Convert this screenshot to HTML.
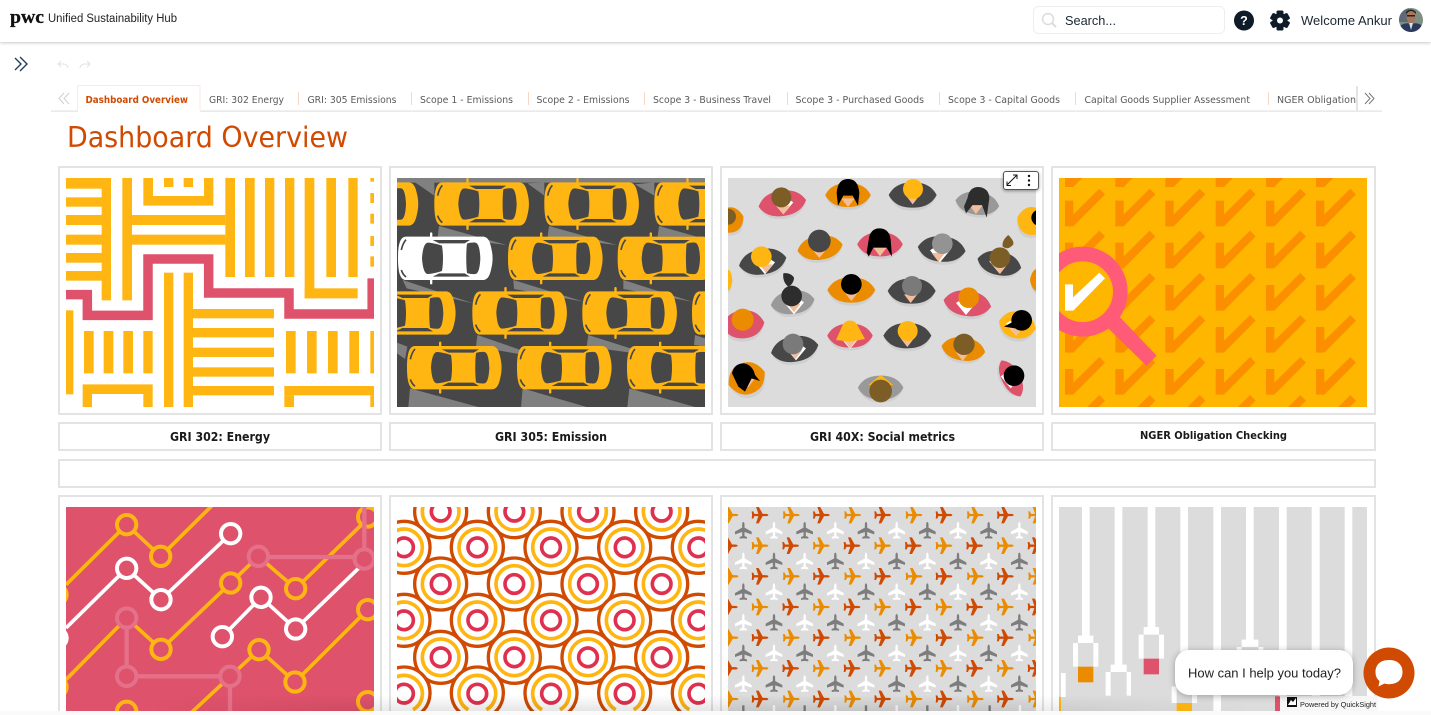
<!DOCTYPE html>
<html><head><meta charset="utf-8"><title>Dashboard Overview</title>
<style>
html,body{margin:0;padding:0;width:1431px;height:715px;overflow:hidden;background:#fff;font-family:"Liberation Sans",sans-serif}
#w{position:relative;width:1431px;height:715px;overflow:hidden}
.a{position:absolute}
svg{display:block}
.hdr{left:0;top:0;width:1431px;height:42px;background:#fff;box-shadow:0 1px 3px rgba(0,0,0,.22)}
.card{border:2px solid #e3e3e3;box-sizing:border-box;background:#fff}
</style></head><body><div id="w">
<div class="a hdr"></div>

<div class="a card" style="left:58px;top:166px;width:324px;height:249px"></div>
<div class="a card" style="left:389px;top:166px;width:324px;height:249px"></div>
<div class="a card" style="left:720px;top:166px;width:324px;height:249px"></div>
<div class="a card" style="left:1051px;top:166px;width:325px;height:249px"></div>
<div class="a card" style="left:58px;top:422px;width:324px;height:29px"></div>
<div class="a card" style="left:389px;top:422px;width:324px;height:29px"></div>
<div class="a card" style="left:720px;top:422px;width:324px;height:29px"></div>
<div class="a card" style="left:1051px;top:422px;width:325px;height:29px"></div>
<div class="a card" style="left:58px;top:459px;width:1318px;height:29px"></div>
<div class="a card" style="left:58px;top:495px;width:324px;height:220px"></div>
<div class="a card" style="left:389px;top:495px;width:324px;height:220px"></div>
<div class="a card" style="left:720px;top:495px;width:324px;height:220px"></div>
<div class="a card" style="left:1051px;top:495px;width:325px;height:220px"></div>

<!-- Card 1: stripes -->
<svg class="a" style="left:66px;top:178px" width="308" height="229" viewBox="33 39 924 687">
<rect x="33" y="39" width="924" height="687" fill="#fff"/>
<g fill="#FFB612">
<rect x="140" y="39" width="28" height="367"/>
<rect x="33" y="39" width="135" height="32"/><rect x="33" y="97" width="135" height="28"/><rect x="33" y="150" width="135" height="30"/><rect x="33" y="209" width="135" height="30"/><rect x="33" y="264" width="135" height="29"/><rect x="33" y="318" width="135" height="29"/>
<rect x="202" y="39" width="29" height="367"/><rect x="231" y="150" width="280" height="30"/><rect x="231" y="209" width="280" height="30"/>
<rect x="511" y="39" width="29" height="297"/><rect x="570" y="39" width="29" height="297"/><rect x="630" y="39" width="28" height="297"/><rect x="690" y="39" width="28" height="297"/>
<rect x="749" y="39" width="29" height="361"/><rect x="749" y="370" width="159" height="30"/>
<rect x="814" y="39" width="29" height="297"/><rect x="880" y="39" width="28" height="297"/>
<rect x="946" y="39" width="11" height="11"/><rect x="946" y="84" width="11" height="30"/><rect x="946" y="146" width="11" height="30"/><rect x="946" y="213" width="11" height="30"/><rect x="946" y="274" width="11" height="31"/>
<path d="M265 39h29v54h153V39h28v83H265z"/>
<rect x="327" y="39" width="28" height="27"/><rect x="386" y="39" width="28" height="27"/>
<rect x="327" y="323" width="28" height="403"/><rect x="386" y="323" width="28" height="403"/>
<rect x="414" y="432" width="243" height="28"/><rect x="414" y="489" width="243" height="28"/><rect x="414" y="548" width="243" height="28"/><rect x="414" y="607" width="243" height="28"/><rect x="414" y="663" width="243" height="28"/>
<rect x="33" y="436" width="22" height="252"/>
<rect x="87" y="498" width="29" height="127"/><rect x="146" y="498" width="29" height="127"/><rect x="205" y="498" width="29" height="127"/><rect x="265" y="498" width="28" height="127"/>
<path d="M83 726V658h210v68h-28V687H111v39z"/>
<rect x="693" y="498" width="29" height="127"/><rect x="756" y="498" width="29" height="127"/><rect x="819" y="498" width="29" height="127"/><rect x="883" y="498" width="29" height="127"/><rect x="946" y="498" width="11" height="127"/>
<rect x="688" y="663" width="269" height="28"/><rect x="688" y="691" width="29" height="35"/><rect x="946" y="691" width="11" height="35"/>
</g>
<path d="M33 389H97V451H279V282H461V384H702V447H951.500V340" fill="none" stroke="#DE526B" stroke-width="28.500"/>
</svg>

<!-- Card 2: cars -->
<svg class="a" style="left:397px;top:178px" width="308" height="229" viewBox="21 39 924 687">
<defs>
<g id="car">
<rect x="-46" y="-78" width="7" height="156" rx="3"/>
<path d="M-118-65H112C128-65 134-50 138-30C143-10 143 10 138 30C134 50 128 65 112 65H-118C-136 65-142 40-142 0C-142-40-136-65-118-65Z"/>
<path d="M-52-47C-38-46-22-42-10-38C-6-14-6 14-10 38C-22 42-38 46-52 47C-62 47-68 30-70 0C-68-30-62-47-52-47ZM65-44C72-47 84-48 90-47C100-46 104-25 105 0C104 25 100 46 90 47C84 48 72 47 65 44C62 20 62-20 65-44ZM-38-55H74L58-45H-18ZM-38 55H74L58 45H-18Z" fill="#474747"/>
<path d="M-132-25Q-128-45-118-56M-132 35Q-128 48-118 56" fill="none" stroke="#474747" stroke-width="5"/>
</g>
</defs>
<rect x="21" y="39" width="924" height="687" fill="#474747"/>
<g fill="#808080">
<rect x="21" y="39" width="924" height="14"/>
<path d="M75 52L133 92V52ZM412 55L463 92V52ZM735 58L793 92V52Z"/>
<path d="M147 183L350 240L143 215ZM477 183L680 240L473 215ZM807 183L945 222V215L803 215Z"/>
<path d="M38 345L250 415L50 370ZM370 345L580 410L372 372ZM700 345L905 410L700 372Z"/>
<path d="M21 533L52 545L45 582L21 565ZM262 510L465 580L258 545ZM595 510L790 572L590 545ZM915 510L945 520V545L912 540Z"/>
<path d="M60 670L265 726H55ZM398 670L590 726H393ZM718 670L915 726H712Z"/>
</g>
<g fill="#FFB612">
<use href="#car" transform="translate(-57 117)"/><use href="#car" transform="translate(275 117)"/><use href="#car" transform="translate(605 117)"/><use href="#car" transform="translate(935 117)"/>
<use href="#car" transform="translate(496 280)"/><use href="#car" transform="translate(825 280)"/>
<use href="#car" transform="translate(55 444)"/><use href="#car" transform="translate(389 444)"/><use href="#car" transform="translate(719 444)"/><use href="#car" transform="translate(1048 444)"/>
<use href="#car" transform="translate(193 608)"/><use href="#car" transform="translate(523 608)"/><use href="#car" transform="translate(853 608)"/>
</g>
<use href="#car" transform="translate(166 280)" fill="#fff"/>
</svg>

<!-- Card 3: people -->
<svg class="a" style="left:728px;top:178px" width="308" height="229" viewBox="24 39 924 687">
<defs>
<g id="b"><path d="M-70 0C-54-30-30-38 0-38C30-38 54-30 70 0C54 32 30 40 0 40C-30 40-54 32-70 0Z" fill="#cfcfcf" transform="translate(0 7)"/><path d="M-72 0C-56-30-30-38 0-38C30-38 56-30 72 0C56 30 30 38 0 38C-30 38-56 30-72 0Z"/></g>
<path id="n" d="M-20-4L0 22L20-4Z" fill="#f2bd9a"/>
<path id="c" d="M-30-6L0 30L30-6L18-14H-18Z" fill="#fff"/>
</defs>
<rect x="24" y="39" width="924" height="687" fill="#DCDCDC"/>
<use href="#b" transform="translate(187 115) rotate(-8)" fill="#DE526B"/><use href="#c" x="190" y="118"/><use href="#n" x="190" y="126" fill="#8f8f8f"/><circle cx="184" cy="97" r="30" fill="#7D5D26"/>
<use href="#b" transform="translate(384 90) scale(.95 .95)" fill="#EB8C00"/><use href="#n" x="384" y="104"/><path d="M350 85C352 55 364 42 384 42C404 42 416 55 418 85L414 122L398 92H370L354 122Z" fill="#000"/>
<use href="#b" transform="translate(578 90)" fill="#474747"/><use href="#n" x="578" y="96"/><circle cx="579" cy="72" r="30" fill="#FFB612"/>
<use href="#b" transform="translate(772 115) rotate(8) scale(.92 .9)" fill="#999"/><use href="#n" x="768" y="125" fill="#DE526B"/><path d="M743 98C746 78 756 66 775 66C796 67 808 80 808 100L800 158L786 120H758L738 145L732 125Z" fill="#2d2d2d"/>
<use href="#b" transform="translate(935 168) rotate(15) scale(.62 1.1)" fill="#FFB612"/><circle cx="958" cy="158" r="24" fill="#000"/>
<use href="#b" transform="translate(30 165) rotate(-15) scale(.58 1)" fill="#EB8C00"/><circle cx="24" cy="155" r="24" fill="#7D5D26"/>
<use href="#b" transform="translate(300 248) rotate(-8) scale(.95)" fill="#EB8C00"/><use href="#c" x="298" y="248"/><use href="#n" x="298" y="256"/><circle cx="298" cy="228" r="34" fill="#474747"/>
<use href="#b" transform="translate(480 238) scale(.95)" fill="#DE526B"/><use href="#n" x="480" y="252" fill="#FFB612"/><path d="M446 225C448 202 460 190 478 190C498 190 510 202 512 225L516 275L500 248H460L446 275L440 262Z" fill="#000"/>
<use href="#b" transform="translate(665 252) rotate(5)" fill="#474747"/><use href="#c" x="660" y="262"/><use href="#n" x="655" y="268" fill="#EB8C00"/><circle cx="667" cy="236" r="31" fill="#939393"/>
<use href="#b" transform="translate(128 290) rotate(-10)" fill="#474747"/><use href="#c" x="135" y="298"/><use href="#n" x="138" y="302" fill="#D04A02"/><circle cx="124" cy="275" r="31" fill="#FFB612"/>
<use href="#b" transform="translate(838 295) rotate(12) scale(.93)" fill="#474747"/><use href="#c" x="838" y="295"/><use href="#n" x="840" y="305"/><circle cx="840" cy="278" r="31" fill="#7D5D26"/><path d="M848 245C845 230 855 218 865 210C875 220 882 230 880 238C868 252 858 252 848 245Z" fill="#7D5D26"/>
<use href="#b" transform="translate(24 345) scale(.18 .8)" fill="#FFB612"/><use href="#b" transform="translate(955 345) scale(.35 .9)" fill="#EB8C00"/>
<use href="#b" transform="translate(394 375)" fill="#EB8C00"/><use href="#n" x="394" y="386" fill="#FFB612"/><circle cx="394" cy="358" r="31" fill="#000"/>
<use href="#b" transform="translate(575 378)" fill="#474747"/><use href="#n" x="572" y="392" fill="#9a6a15"/><circle cx="576" cy="363" r="30" fill="#7a7a7a"/>
<use href="#b" transform="translate(218 412) rotate(-8) scale(.92)" fill="#999"/><use href="#c" x="222" y="418"/><use href="#n" x="222" y="420" fill="#8d6748"/><circle cx="215" cy="393" r="31" fill="#2d2d2d"/><path d="M205 365C192 355 188 340 190 325C205 322 218 330 222 338C222 350 215 360 205 365Z" fill="#2d2d2d"/>
<use href="#b" transform="translate(742 415) rotate(8)" fill="#DE526B"/><use href="#c" x="738" y="420"/><circle cx="746" cy="398" r="31" fill="#EB8C00"/>
<use href="#b" transform="translate(70 478) rotate(-5) scale(.88 1.1)" fill="#DE526B"/><circle cx="68" cy="464" r="33" fill="#EB8C00"/>
<use href="#b" transform="translate(892 480) rotate(12) scale(.78 1.05)" fill="#FFB612"/><use href="#c" x="888" y="482"/><use href="#n" x="888" y="490" fill="#8d6748"/><circle cx="905" cy="466" r="31" fill="#000"/><path d="M880 470L852 485L885 490Z" fill="#000"/>
<use href="#b" transform="translate(390 512) scale(.95)" fill="#DE526B"/><use href="#c" x="390" y="522"/><use href="#n" x="390" y="528" fill="#FFB612"/><path d="M348 525L368 480C378 462 402 462 412 480L435 522L390 530Z" fill="#FFB612"/>
<use href="#b" transform="translate(562 512)" fill="#474747"/><use href="#n" x="562" y="524"/><circle cx="563" cy="498" r="30" fill="#FFB612"/>
<use href="#b" transform="translate(730 552) rotate(8) scale(.92)" fill="#EB8C00"/><use href="#n" x="728" y="566"/><circle cx="732" cy="538" r="32" fill="#7D5D26"/>
<use href="#b" transform="translate(224 552) rotate(-10)" fill="#474747"/><use href="#c" x="228" y="556"/><use href="#n" x="226" y="560"/><circle cx="219" cy="537" r="31" fill="#7a7a7a"/>
<use href="#b" transform="translate(80 640) rotate(-20) scale(.8 1.25)" fill="#EB8C00"/><use href="#n" x="84" y="646" fill="#a0705c"/><path d="M36 625C40 605 52 595 72 595C90 598 102 612 105 630L120 648L95 640L75 680L55 665Z" fill="#000"/>
<use href="#b" transform="translate(482 668) scale(.95)" fill="#999"/><path d="M445 660L482 630L520 660Z" fill="#FFB612"/><circle cx="482" cy="678" r="34" fill="#7D5D26"/>
<use href="#b" transform="translate(873 640) rotate(62) scale(.85 .72)" fill="#DE526B"/><use href="#c" x="872" y="640"/><circle cx="882" cy="632" r="31" fill="#000"/>
</svg>

<!-- Expand toolbar -->
<div class="a" style="left:1003px;top:171px;width:36px;height:19px;box-sizing:border-box;background:#fff;border:1px solid #555;border-radius:3px;box-shadow:0 1px 3px rgba(0,0,0,.4)"></div>
<svg class="a" style="left:1003px;top:171px" width="36" height="19" viewBox="0 0 36 19">
<path d="M4.500 13.500L13.500 4.500M10 4H14V8M8 14.500H4V10.500" fill="none" stroke="#111" stroke-width="1"/>
<circle cx="26" cy="5" r="1.200" fill="#111"/><circle cx="26" cy="9.500" r="1.200" fill="#111"/><circle cx="26" cy="14" r="1.200" fill="#111"/>
</svg>

<!-- Card 4: checks -->
<svg class="a" style="left:1059px;top:178px" width="308" height="229" viewBox="27 39 924 687">
<defs>
<path id="k" d="M45 107H70V148L148 71L165 88L70 184H45Z"/>
<g id="kr"><use href="#k"/><use href="#k" x="151"/><use href="#k" x="301"/><use href="#k" x="452"/><use href="#k" x="603"/><use href="#k" x="753"/></g>
</defs>
<rect x="27" y="39" width="924" height="687" fill="#FFB600"/>
<g fill="#FB8F00">
<use href="#kr" y="-118"/><use href="#kr"/><use href="#kr" y="126"/><use href="#kr" y="253"/><use href="#kr" y="379"/><use href="#kr" y="505"/><use href="#kr" y="619"/>
</g>
<circle cx="98" cy="380" r="113" fill="#FFB600" stroke="#FF5A78" stroke-width="44"/>
<path d="M208 455L320 572L290 603L175 490Z" fill="#FF5A78"/>
<path d="M45 358H69V397L148 323L165 340L70 437H45Z" fill="#fff"/>
</svg>

<!-- Row 2 card 1: circuits -->
<svg class="a" style="left:66px;top:507px" width="308" height="204" viewBox="33 52 924 612">
<rect x="33" y="52" width="924" height="612" fill="#DE526B"/>
<g fill="none" stroke="#FFB612" stroke-width="11">
<path d="M33 285L215 105L317 200L480 39"/>
<path d="M33 570L215 385L318 479L527 280L610 200L722 297L925 100L945 80"/>
<path d="M410 668L612 480L720 577L938 360"/>
</g>
<g fill="#DE526B" stroke="#FFB612" stroke-width="12">
<circle cx="215" cy="105" r="29"/><circle cx="317" cy="200" r="29"/><circle cx="6" cy="315" r="29"/><circle cx="318" cy="479" r="29"/><circle cx="527" cy="280" r="29"/><circle cx="722" cy="297" r="29"/><circle cx="938" cy="82" r="29"/><circle cx="6" cy="592" r="29"/><circle cx="612" cy="480" r="29"/><circle cx="720" cy="577" r="29"/><circle cx="938" cy="360" r="29"/><path d="M186 665A29 29 0 0 1 244 665"/><circle cx="938" cy="636" r="29"/>
</g>
<g fill="none" stroke="#E5708A" stroke-width="13">
<path d="M610 202H928V52"/><path d="M215 385V560H525V668"/>
</g>
<g fill="#DE526B" stroke="#E5708A" stroke-width="12">
<circle cx="610" cy="200" r="29"/><circle cx="928" cy="208" r="29"/><circle cx="215" cy="385" r="29"/><circle cx="215" cy="560" r="29"/><circle cx="525" cy="560" r="29"/>
</g>
<g fill="none" stroke="#fff" stroke-width="11">
<path d="M33 415L215 236L318 330L527 132"/><path d="M502 441L618 323L722 418L925 222"/>
</g>
<g fill="#DE526B" stroke="#fff" stroke-width="12">
<circle cx="215" cy="236" r="29"/><circle cx="318" cy="330" r="29"/><circle cx="527" cy="132" r="29"/><circle cx="6" cy="445" r="29"/><circle cx="502" cy="441" r="29"/><circle cx="618" cy="323" r="29"/><circle cx="722" cy="418" r="29"/>
</g>
<circle cx="928" cy="208" r="29" fill="#DE526B" stroke="#E5708A" stroke-width="12"/>
</svg>

<!-- Row 2 card 2: rings -->
<svg class="a" style="left:397px;top:507px" width="308" height="204" viewBox="21 52 924 612">
<defs>
<g id="r"><circle r="78" fill="#fff" stroke="#D04A02" stroke-width="10"/><circle r="55" fill="none" stroke="#FFB612" stroke-width="11"/><circle r="28" fill="none" stroke="#E0304F" stroke-width="11"/></g>
<g id="rb"><path d="M-52.200 56A78 78 0 1 1 52.200 56Z" fill="#fff"/><path d="M-52.200 56A78 78 0 1 1 52.200 56" fill="none" stroke="#D04A02" stroke-width="10"/><path d="M-27 48A55 55 0 1 1 27 48" fill="none" stroke="#FFB612" stroke-width="11"/><circle r="28" fill="none" stroke="#E0304F" stroke-width="11"/></g>
<g id="ru"><use href="#r" x="152"/><use href="#r" x="373"/><use href="#r" x="594"/><use href="#r" x="815"/></g>
<g id="ro"><use href="#r" x="42"/><use href="#r" x="262"/><use href="#r" x="483"/><use href="#r" x="704"/><use href="#r" x="925"/></g>
<g id="rob"><use href="#rb" x="42"/><use href="#rb" x="262"/><use href="#rb" x="483"/><use href="#rb" x="704"/><use href="#rb" x="925"/></g>
</defs>
<rect x="21" y="52" width="924" height="612" fill="#fff"/>
<use href="#ru" y="66"/><use href="#ru" y="283"/><use href="#ru" y="503"/>
<use href="#ro" y="173"/><use href="#ro" y="392"/><use href="#rob" y="612"/>
</svg>

<!-- Row 2 card 3: planes -->
<svg class="a" style="left:728px;top:507px" width="308" height="204" viewBox="24 52 924 612">
<defs>
<path id="p" d="M25 0C25-2 22-3.500 17-3.500H8L-4-25H-12L-5-3.500H-17L-20-11H-25L-24-3V3L-25 11H-20L-17 3.500H-5L-12 25H-4L8 3.500H17C22 3.500 25 2 25 0Z"/>
<g id="t">
<use href="#p" transform="translate(30 76)" fill="#EB8C00"/><use href="#p" transform="translate(120 76)" fill="#D04A02"/>
<use href="#p" transform="translate(28 168)" fill="#D04A02"/><use href="#p" transform="translate(120 168)" fill="#EB8C00"/>
<use href="#p" transform="translate(70 122) rotate(-90)" fill="#7d7d7d"/><use href="#p" transform="translate(162 122) rotate(-90)" fill="#fff"/>
<use href="#p" transform="translate(70 214) rotate(-90)" fill="#fff"/><use href="#p" transform="translate(162 214) rotate(-90)" fill="#7d7d7d"/>
</g>
<g id="tr"><use href="#t"/><use href="#t" x="184"/><use href="#t" x="368"/><use href="#t" x="552"/><use href="#t" x="736"/><use href="#t" x="920"/></g>
</defs>
<rect x="24" y="52" width="924" height="612" fill="#DCDCDC"/>
<use href="#tr"/><use href="#tr" y="184"/><use href="#tr" y="368"/>
<g fill="#EB8C00"><use href="#p" transform="translate(30 628)"/><use href="#p" transform="translate(214 628)"/><use href="#p" transform="translate(398 628)"/><use href="#p" transform="translate(582 628)"/><use href="#p" transform="translate(766 628)"/><use href="#p" transform="translate(950 628)"/></g>
<g fill="#D04A02"><use href="#p" transform="translate(120 628)"/><use href="#p" transform="translate(304 628)"/><use href="#p" transform="translate(488 628)"/><use href="#p" transform="translate(672 628)"/><use href="#p" transform="translate(856 628)"/></g>
<g fill="#7d7d7d"><rect x="66.500" y="647" width="7" height="20"/><rect x="250.500" y="647" width="7" height="20"/><rect x="434.500" y="647" width="7" height="20"/><rect x="618.500" y="647" width="7" height="20"/><rect x="805.500" y="647" width="7" height="20"/></g>
<g fill="#fff"><rect x="158.500" y="647" width="7" height="20"/><rect x="342.500" y="647" width="7" height="20"/><rect x="526.500" y="647" width="7" height="20"/><rect x="710.500" y="647" width="7" height="20"/><rect x="896.500" y="647" width="7" height="20"/></g>
</svg>

<!-- Row 2 card 4: plugs -->
<svg class="a" style="left:1059px;top:507px" width="308" height="204" viewBox="27 52 924 612">
<rect x="27" y="52" width="924" height="612" fill="#DCDCDC"/>
<g fill="#fff">
<rect x="96" y="52" width="23" height="390"/><rect x="194" y="52" width="23" height="476"/><rect x="293" y="52" width="23" height="364"/><rect x="391" y="52" width="23" height="520"/><rect x="490" y="52" width="23" height="612"/><rect x="588" y="52" width="23" height="402"/><rect x="687" y="52" width="23" height="612"/><rect x="785" y="52" width="24" height="612"/><rect x="884" y="52" width="23" height="612"/>
<path d="M84 438H130V460H145V531H130V460H84V531H69V460H84Z"/>
<path d="M182 525H230V547H243V618H230V547H182V618H167V547H182Z"/>
<path d="M281 412H327V435H342V507H327V435H281V507H266V435H281Z"/>
<path d="M380 568H426V590H441V640H426V590H380V640H365V590H380Z"/>
<path d="M575 450H625V472H640V520H625V472H575V520H560V472H575Z"/>
<rect x="33" y="550" width="14" height="72"/>
</g>
<rect x="84" y="531" width="46" height="47" fill="#EB8C00"/>
<rect x="281" y="507" width="46" height="47" fill="#DE526B"/>
<rect x="380" y="640" width="46" height="24" fill="#FFB612"/>
<rect x="675" y="620" width="17" height="44" fill="#DE526B"/>
<rect x="27" y="622" width="6" height="42" fill="#FFB612"/>
</svg>

<!-- bottom edge -->
<div class="a" style="left:150px;top:695px;width:1100px;height:16px;background:linear-gradient(to bottom,rgba(0,0,0,0),rgba(0,0,0,.1));-webkit-mask-image:linear-gradient(to right,transparent,#000 25%,#000 75%,transparent)"></div>
<div class="a" style="left:0;top:711px;width:1431px;height:4px;background:#fafafa"></div>

<!-- All text / chrome -->
<svg class="a" style="left:0;top:0" width="1431" height="715" viewBox="0 0 1431 715">
<g font-family="'Liberation Sans',sans-serif">
<text x="10" y="23" font-family="'Liberation Serif',serif" font-size="19" font-weight="bold" fill="#111" stroke="#111" stroke-width=".3" textLength="34" lengthAdjust="spacingAndGlyphs">pwc</text>
<text x="48" y="22" font-size="11.500" fill="#222" textLength="129" lengthAdjust="spacingAndGlyphs">Unified Sustainability Hub</text>

<rect x="1033.500" y="6.500" width="191" height="27" rx="5" fill="#fff" stroke="#eee"/>
<circle cx="1048" cy="19" r="5.500" fill="none" stroke="#dcdcdc" stroke-width="1.500"/><path d="M1052 23L1056 27" stroke="#dcdcdc" stroke-width="2"/>
<text x="1065" y="25" font-size="13" fill="#1c2733" textLength="51" lengthAdjust="spacingAndGlyphs">Search...</text>
<circle cx="1244" cy="20.500" r="10" fill="#0e1b28"/>
<text x="1244" y="25" font-size="12.500" font-weight="bold" fill="#fff" text-anchor="middle">?</text>
<g fill="#0e1b28"><circle cx="1280" cy="20.500" r="7.500"/><g><rect x="1276.500" y="10.500" width="7" height="20" rx="1.500"/><rect x="1276.500" y="10.500" width="7" height="20" rx="1.500" transform="rotate(60 1280 20.500)"/><rect x="1276.500" y="10.500" width="7" height="20" rx="1.500" transform="rotate(120 1280 20.500)"/></g></g>
<circle cx="1280" cy="20.500" r="3" fill="#fff"/>
<text x="1301" y="25" font-size="13" fill="#1c2733" textLength="91" lengthAdjust="spacingAndGlyphs">Welcome Ankur</text>
<clipPath id="av"><circle cx="1411" cy="20" r="12"/></clipPath>
<g clip-path="url(#av)"><rect x="1399" y="8" width="24" height="24" fill="#7e8f82"/><rect x="1399" y="8" width="10" height="14" fill="#5d6a78"/><path d="M1399 32L1401 25Q1406 22 1411 24Q1417 22 1421 25L1423 32Z" fill="#2a3a5c"/><ellipse cx="1411" cy="17" rx="4.500" ry="6" fill="#a8765c"/><path d="M1406 14Q1411 8 1416 14L1416 12Q1411 7 1406 12Z" fill="#222"/><rect x="1407" y="15" width="8" height="1.500" fill="#222"/><path d="M1409 23L1411 30L1413 23Z" fill="#dde"/></g>

<path d="M15 58L21 64L15 70M20 57L27 64L20 71" fill="none" stroke="#22405c" stroke-width="1.400"/>
<path d="M58 64L61 61M58 64L61 67M58 64H64Q68 65 68 68" fill="none" stroke="#e2e2e2" stroke-width="1"/>
<path d="M90 64L87 61M90 64L87 67M90 64H84Q80 65 80 68" fill="none" stroke="#e2e2e2" stroke-width="1"/>

<rect x="51" y="110.500" width="1331" height="1.200" fill="#e2e2e2"/>
<rect x="77.500" y="85.500" width="122.500" height="26" fill="#fff" stroke="#fbeae3"/>
<rect x="78" y="110" width="122" height="2" fill="#fff"/>
<path d="M64 93L59 98.500L64 104M69 93L64 98.500L69 104" fill="none" stroke="#cfcfcf" stroke-width="1"/>
<g font-family="'DejaVu Sans',sans-serif">
<text x="85.500" y="103" font-size="9.800" font-weight="bold" fill="#D04A02" textLength="102.500" lengthAdjust="spacingAndGlyphs">Dashboard Overview</text>
<g font-size="9.800" fill="#5a5a5a">
<text x="209" y="103" textLength="75" lengthAdjust="spacingAndGlyphs">GRI: 302 Energy</text>
<text x="307.500" y="103" textLength="89" lengthAdjust="spacingAndGlyphs">GRI: 305 Emissions</text>
<text x="420" y="103" textLength="93" lengthAdjust="spacingAndGlyphs">Scope 1 - Emissions</text>
<text x="536.500" y="103" textLength="93" lengthAdjust="spacingAndGlyphs">Scope 2 - Emissions</text>
<text x="653" y="103" textLength="118" lengthAdjust="spacingAndGlyphs">Scope 3 - Business Travel</text>
<text x="795.500" y="103" textLength="128.500" lengthAdjust="spacingAndGlyphs">Scope 3 - Purchased Goods</text>
<text x="948" y="103" textLength="112" lengthAdjust="spacingAndGlyphs">Scope 3 - Capital Goods</text>
<text x="1084.500" y="103" textLength="165.500" lengthAdjust="spacingAndGlyphs">Capital Goods Supplier Assessment</text>
<text x="1277" y="103" textLength="79" lengthAdjust="spacingAndGlyphs">NGER Obligation</text>
</g>
<text x="67" y="147" font-size="28.500" fill="#D04A02" textLength="281" lengthAdjust="spacingAndGlyphs">Dashboard Overview</text>
<g font-weight="bold" fill="#1a1a1a" font-size="12">
<text x="170" y="441" textLength="100" lengthAdjust="spacingAndGlyphs">GRI 302: Energy</text>
<text x="495" y="441" textLength="112" lengthAdjust="spacingAndGlyphs">GRI 305: Emission</text>
<text x="810" y="441" textLength="145" lengthAdjust="spacingAndGlyphs">GRI 40X: Social metrics</text>
<text x="1140" y="439" font-size="10.500" textLength="147" lengthAdjust="spacingAndGlyphs">NGER Obligation Checking</text>
</g>
</g>
<g fill="#f9d5c6"><rect x="298" y="92" width="1" height="13"/><rect x="411" y="92" width="1" height="13"/><rect x="528" y="92" width="1" height="13"/><rect x="644" y="92" width="1" height="13"/><rect x="787" y="92" width="1" height="13"/><rect x="939" y="92" width="1" height="13"/><rect x="1075" y="92" width="1" height="13"/><rect x="1268" y="92" width="1" height="13"/></g>
<rect x="1356" y="86" width="2" height="25" fill="#e4e4e4"/>
<path d="M1365 93L1370 98.500L1365 104M1369 93L1374 98.500L1369 104" fill="none" stroke="#777" stroke-width="1"/>

<rect x="1280" y="696" width="98" height="15" fill="#f7f7f7"/>
<rect x="1287" y="697" width="10" height="10" fill="#111"/><path d="M1288 705L1291 700L1293 702L1296 698V705Z" fill="#fff"/>
<text x="1300" y="707" font-size="7.500" fill="#222" textLength="76" lengthAdjust="spacingAndGlyphs">Powered by QuickSight</text>
</g>
</svg>

<!-- Chat -->
<div class="a" style="left:1175px;top:650px;width:178px;height:45px;background:#fff;border-radius:14px;box-shadow:0 1px 7px rgba(0,0,0,.3)"></div>
<svg class="a" style="left:1175px;top:650px" width="178" height="45" viewBox="0 0 178 45"><text x="13" y="27.500" font-family="'Liberation Sans',sans-serif" font-size="13" fill="#222" textLength="153" lengthAdjust="spacingAndGlyphs">How can I help you today?</text></svg>
<svg class="a" style="left:1363px;top:647px" width="52" height="52" viewBox="0 0 52 52">
<circle cx="26" cy="26" r="25.500" fill="#D04A02"/>
<path d="M26 13C16 13 12.500 19 12.500 25C12.500 29 14 32 16.500 34L15.500 39.500L21.500 36.500C23 37 24.500 37.200 26 37.200C35 37.200 39.500 32 39.500 25C39.500 18 35 13 26 13Z" fill="#fff"/>
</svg>
</div></body></html>
